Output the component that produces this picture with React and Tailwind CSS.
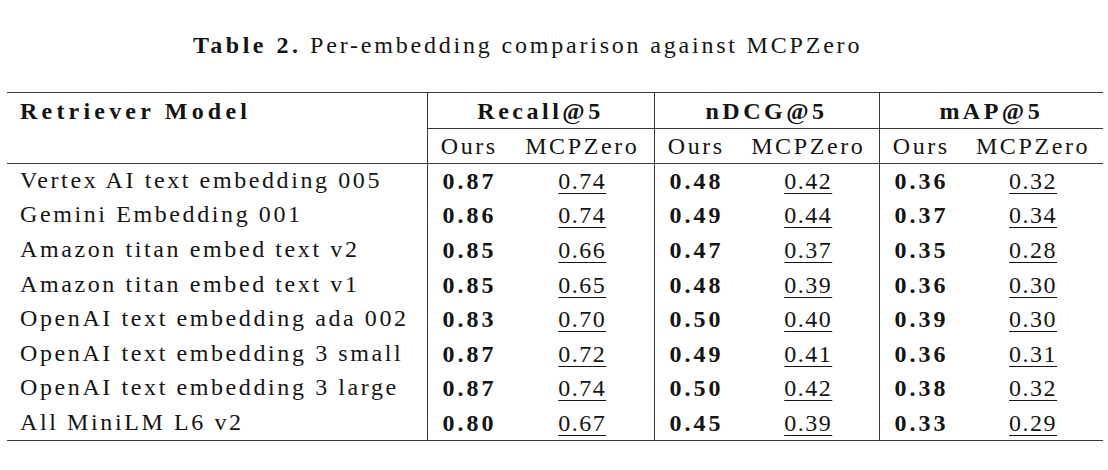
import React from "react";

const rows = [
    // model, recall ours/mcp, ndcg ours/mcp, map ours/mcp
    ["Vertex AI text embedding 005", "0.87", "0.74", "0.48", "0.42", "0.36", "0.32"],
    ["Gemini Embedding 001", "0.86", "0.74", "0.49", "0.44", "0.37", "0.34"],
    ["Amazon titan embed text v2", "0.85", "0.66", "0.47", "0.37", "0.35", "0.28"],
    ["Amazon titan embed text v1", "0.85", "0.65", "0.48", "0.39", "0.36", "0.30"],
    ["OpenAI text embedding ada 002", "0.83", "0.70", "0.50", "0.40", "0.39", "0.30"],
    ["OpenAI text embedding 3 small", "0.87", "0.72", "0.49", "0.41", "0.36", "0.31"],
    ["OpenAI text embedding 3 large", "0.87", "0.74", "0.50", "0.42", "0.38", "0.32"],
    ["All MiniLM L6 v2", "0.80", "0.67", "0.45", "0.39", "0.33", "0.29"],
];

const groups = ["Recall@5", "nDCG@5", "mAP@5"];

const ValuePair = ({ ours, other }) => (
    <>
        <td className="border-l-[1.5px] border-[#3a3a3a] pl-[15px] text-left font-bold tracking-[3px]">
            {ours}
        </td>
        <td className="text-center tracking-[1.5px]">
            <span className="underline decoration-1 underline-offset-[4px]">{other}</span>
        </td>
    </>
);

const App = () => {
    return (
        <div
            className="w-[1108px] h-[470px] bg-white text-[#141414] text-[24px] leading-none tracking-[2.6px]"
            style={{ fontFamily: '"Liberation Serif", serif' }}
        >
            {/* caption */}
            <div className="h-[92px] pl-[193px] pt-[33px]">
                <span className="font-bold tracking-[3.5px]">Table 2.</span>{" "}
                <span className="tracking-[2.8px]">Per-embedding comparison against MCPZero</span>
            </div>

            <table className="ml-[7px] w-[1096px] table-fixed border-collapse">
                <colgroup>
                    <col className="w-[420px]" />
                    <col className="w-[84px]" />
                    <col className="w-[143px]" />
                    <col className="w-[84px]" />
                    <col className="w-[141px]" />
                    <col className="w-[84px]" />
                    <col className="w-[140px]" />
                </colgroup>
                <thead>
                    <tr className="h-[36px] border-t-[1.5px] border-[#3a3a3a]">
                        <th className="pl-[13px] text-left font-bold tracking-[4.2px] align-middle">
                            Retriever Model
                        </th>
                        {groups.map((g) => (
                            <th
                                key={g}
                                colSpan={2}
                                className="border-l-[1.5px] border-b-[1.5px] border-[#3a3a3a] text-center font-bold tracking-[3.5px]"
                            >
                                {g}
                            </th>
                        ))}
                    </tr>
                    <tr className="h-[35px] border-b-[1.5px] border-[#3a3a3a]">
                        <th />
                        {groups.map((g) => (
                            <React.Fragment key={g}>
                                <th className="border-l-[1.5px] border-[#3a3a3a] text-center font-normal">
                                    Ours
                                </th>
                                <th className="text-center font-normal">MCPZero</th>
                            </React.Fragment>
                        ))}
                    </tr>
                </thead>
                <tbody className="border-b-[1.5px] border-[#3a3a3a]">
                    {rows.map((r) => (
                        <tr key={r[0]} className="h-[34.6px]">
                            <td className="pl-[13px] pb-[2px] text-left whitespace-nowrap">{r[0]}</td>
                            <ValuePair ours={r[1]} other={r[2]} />
                            <ValuePair ours={r[3]} other={r[4]} />
                            <ValuePair ours={r[5]} other={r[6]} />
                        </tr>
                    ))}
                </tbody>
            </table>
        </div>
    );
};

export default App;
